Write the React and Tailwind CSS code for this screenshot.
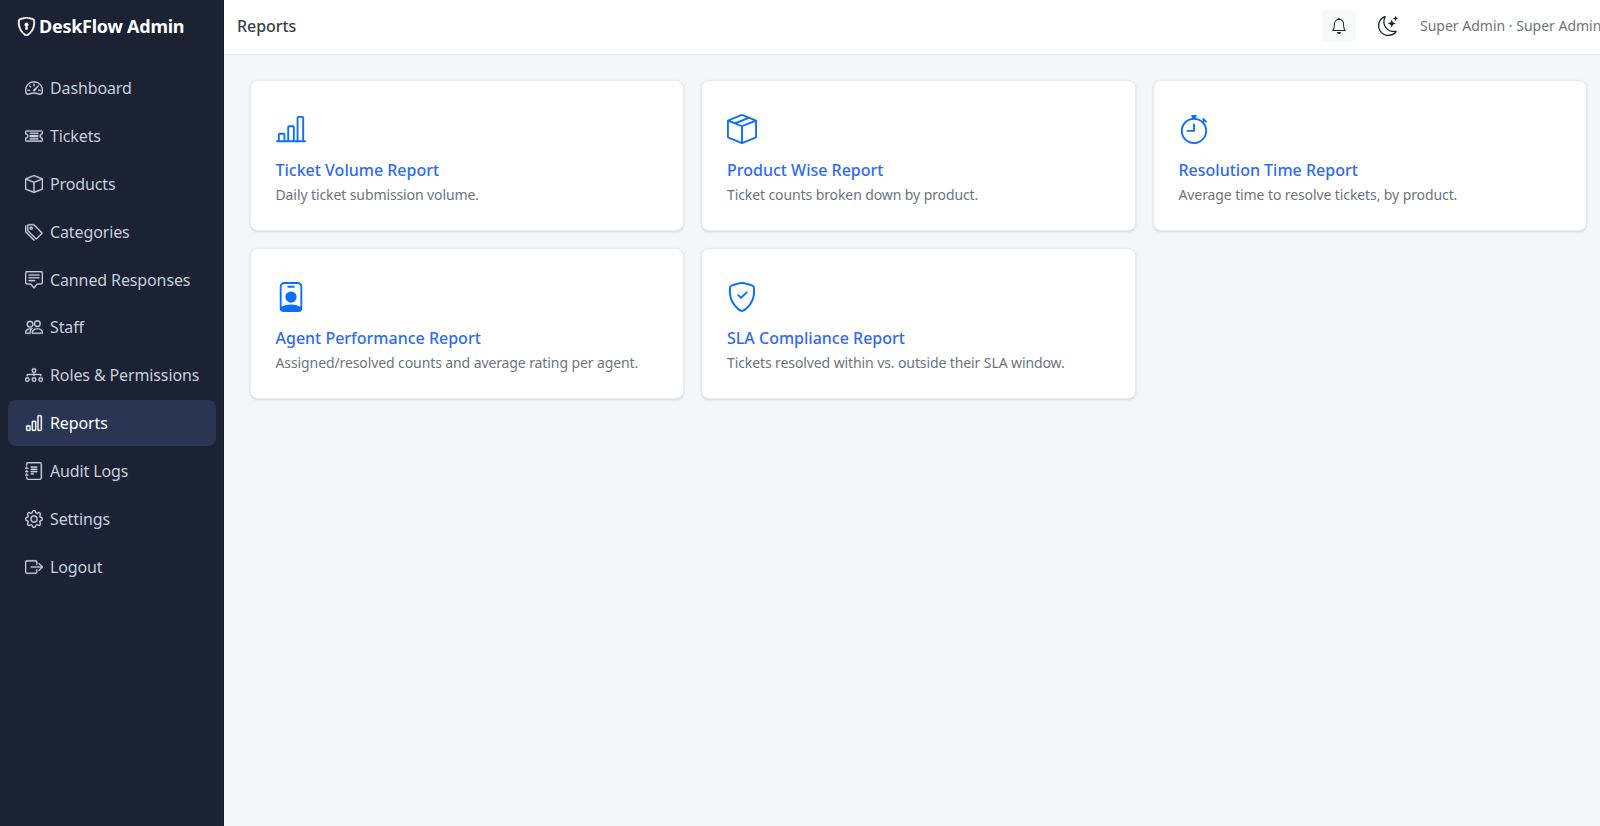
import {
  BsBarChart,
  BsBarChartLine,
  BsBell,
  BsBox,
  BsBoxArrowRight,
  BsBoxSeam,
  BsChatSquareText,
  BsDiagram3,
  BsGear,
  BsJournalText,
  BsMoonStars,
  BsPeople,
  BsPersonBadge,
  BsShieldCheck,
  BsShieldLock,
  BsSpeedometer2,
  BsStopwatch,
  BsTags,
  BsTicketDetailed,
} from "react-icons/bs";

const navItems = [
  { label: "Dashboard", icon: BsSpeedometer2 },
  { label: "Tickets", icon: BsTicketDetailed },
  { label: "Products", icon: BsBox },
  { label: "Categories", icon: BsTags },
  { label: "Canned Responses", icon: BsChatSquareText },
  { label: "Staff", icon: BsPeople },
  { label: "Roles & Permissions", icon: BsDiagram3 },
  { label: "Reports", icon: BsBarChart, active: true },
  { label: "Audit Logs", icon: BsJournalText },
  { label: "Settings", icon: BsGear },
  { label: "Logout", icon: BsBoxArrowRight },
];

const reports = [
  { title: "Ticket Volume Report", text: "Daily ticket submission volume.", icon: BsBarChartLine },
  { title: "Product Wise Report", text: "Ticket counts broken down by product.", icon: BsBoxSeam },
  { title: "Resolution Time Report", text: "Average time to resolve tickets, by product.", icon: BsStopwatch },
  { title: "Agent Performance Report", text: "Assigned/resolved counts and average rating per agent.", icon: BsPersonBadge },
  { title: "SLA Compliance Report", text: "Tickets resolved within vs. outside their SLA window.", icon: BsShieldCheck },
];

function Sidebar() {
  return (
    <aside className="w-[223px] shrink-0 bg-[#1a2233] border-r border-[#141a28] box-content">
      <div className="flex items-center gap-[3px] h-[52px] pl-[17px] text-white text-[18px] font-bold tracking-[-0.25px]">
        <BsShieldLock size={19} stroke="currentColor" strokeWidth={0.5} />
        <span>DeskFlow Admin</span>
      </div>
      <nav className="flex flex-col gap-[2px] mt-[13px] pl-[8px] pr-[7px]">
        {navItems.map((item) => (
          <a
            key={item.label}
            href="#"
            className={
              item.active
                ? "flex items-center gap-[7px] h-[45.9px] pl-[17px] rounded-lg bg-[#2a3553] text-white text-[16px] tracking-[-0.12px]"
                : "flex items-center gap-[7px] h-[45.9px] pl-[17px] rounded-lg text-[#c5cede] text-[16px] tracking-[-0.12px]"
            }
          >
            <item.icon size={18} stroke="currentColor" strokeWidth={0.3} />
            {item.label}
          </a>
        ))}
      </nav>
    </aside>
  );
}

function Topbar() {
  return (
    <header className="flex items-center justify-between h-[55px] shrink-0 bg-white border-b border-[#e3e6ea] pl-[13px]">
      <h1 className="pb-[3px] text-[16px] font-medium text-[#3a3f47] tracking-[-0.05px]">Reports</h1>
      <div className="flex items-center shrink-0 pb-[3px]">
        <button className="flex items-center justify-center w-[34px] h-[32px] rounded bg-[#f8f9fa] text-[#212529]">
          <BsBell size={16} />
        </button>
        <span className="ml-[22px] text-[#212529]">
          <BsMoonStars size={20} />
        </span>
        <span className="ml-[22px] w-[180px] whitespace-nowrap text-[14px] text-[#6c757d]">
          Super Admin · Super Admin
        </span>
      </div>
    </header>
  );
}

function ReportCard({ report }) {
  return (
    <a
      href="#"
      className="block h-[151px] rounded-lg bg-white border border-[#e9ebef] shadow-sm pt-[33px] pl-[25px]"
    >
      <report.icon size={30} className="text-[#0d6efd]" />
      <h2 className="mt-[14px] text-[16px] leading-[24px] font-medium text-[#2f6bf0]">{report.title}</h2>
      <p className="mt-[2px] text-[14px] leading-[21px] text-[#6c757d] tracking-[-0.1px]">{report.text}</p>
    </a>
  );
}

export default function App() {
  return (
    <div className="flex min-h-[826px] font-['Noto_Sans',sans-serif]">
      <Sidebar />
      <div className="flex flex-col flex-1 min-w-0 bg-[#f4f6f9]">
        <Topbar />
        <main className="grid grid-cols-3 gap-x-[17px] gap-y-[16.5px] pt-[25px] pl-[25.5px] pr-[13px]">
          {reports.map((report) => (
            <ReportCard key={report.title} report={report} />
          ))}
        </main>
      </div>
    </div>
  );
}
